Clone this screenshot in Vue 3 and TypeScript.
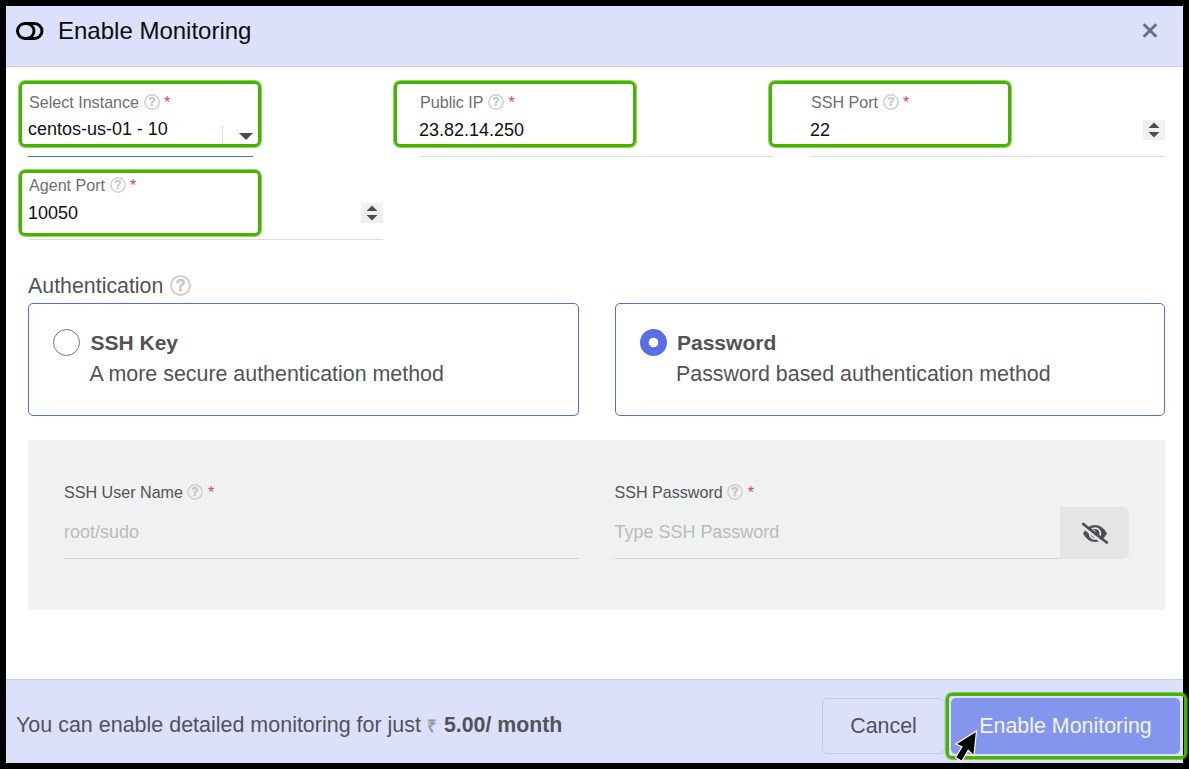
<script setup lang="ts">
import { ref, defineComponent, h } from 'vue'

const HelpIcon = defineComponent({
  props: { size: { type: Number, default: 16 } },
  setup(props) {
    return () =>
      h('svg', { width: props.size, height: props.size, viewBox: '0 0 16 16' }, [
        h('circle', { cx: 8, cy: 8, r: 7.2, fill: 'none', stroke: '#cfcfcf', 'stroke-width': 1.5 }),
        h(
          'text',
          {
            x: 8,
            y: 12.2,
            'text-anchor': 'middle',
            'font-size': 12,
            'font-weight': 700,
            fill: '#c8c8c8',
            stroke: '#c8c8c8',
            'stroke-width': 0.4,
            'font-family': '"Liberation Sans", Arial, sans-serif',
          },
          '?',
        ),
      ])
  },
})

interface Field {
  label: string
  value: string
  kind: 'select' | 'text' | 'number'
}

const fields: Field[] = [
  { label: 'Select Instance', value: 'centos-us-01 - 10', kind: 'select' },
  { label: 'Public IP', value: '23.82.14.250', kind: 'text' },
  { label: 'SSH Port', value: '22', kind: 'number' },
  { label: 'Agent Port', value: '10050', kind: 'number' },
]

const methods = [
  { id: 'key', title: 'SSH Key', text: 'A more secure authentication method' },
  { id: 'password', title: 'Password', text: 'Password based authentication method' },
]
const selected = ref('password')
</script>

<template>
  <div class="frame">
    <section class="modal">
      <header class="head">
        <svg class="toggle" width="28" height="19" viewBox="0 0 28 19">
          <rect x="1.500" y="1.500" width="24.500" height="15" rx="7.500" fill="none" stroke="#000" stroke-width="3" />
          <path d="M9 1.500H10.500A7.500 7.500 0 0 1 10.500 16.500H9" fill="none" stroke="#000" stroke-width="2.800" />
        </svg>
        <h1>Enable Monitoring</h1>
        <svg class="close" width="16" height="16" viewBox="0 0 16 16">
          <path d="M1.700 1.200 14.300 13.800M14.300 1.200 1.700 13.800" stroke="#6c6f7d" stroke-width="3" />
        </svg>
      </header>

      <main class="body">
        <div class="fields">
          <div v-for="(f, i) in fields" :key="f.label" class="field" :class="[f.kind, 'f' + i]">
            <div class="label">
              <span>{{ f.label }}</span>
              <HelpIcon :size="16" />
              <span class="star">*</span>
            </div>
            <div class="value">
              <span>{{ f.value }}</span>
              <span v-if="f.kind === 'select'" class="caret">
                <svg width="14" height="7" viewBox="0 0 14 7"><path d="M0 0H14L7 7Z" fill="#4a4c50" /></svg>
              </span>
              <span v-if="f.kind === 'number'" class="spin">
                <svg width="22" height="20" viewBox="0 0 22 20">
                  <path d="M5.500 8 11 2.400 16.500 8ZM5.500 12H16.500L11 17.600Z" fill="#4d4d4d" />
                </svg>
              </span>
            </div>
            <i class="mark"></i>
          </div>
        </div>

        <div class="auth-title">
          <span>Authentication</span>
          <HelpIcon :size="21" />
        </div>

        <div class="cards">
          <div v-for="m in methods" :key="m.id" class="card" @click="selected = m.id">
            <span class="radio" :class="{ on: selected === m.id }"></span>
            <div>
              <strong>{{ m.title }}</strong>
              <p>{{ m.text }}</p>
            </div>
          </div>
        </div>

        <div class="panel">
          <div class="cred">
            <div class="label">
              <span>SSH User Name</span>
              <HelpIcon :size="16" />
              <span class="star">*</span>
            </div>
            <div class="entry"><span class="hint">root/sudo</span></div>
          </div>
          <div class="cred">
            <div class="label">
              <span>SSH Password</span>
              <HelpIcon :size="16" />
              <span class="star">*</span>
            </div>
            <div class="group">
              <div class="entry"><span class="hint">Type SSH Password</span></div>
              <span class="eye">
                <svg width="28" height="22" viewBox="0 0 28 22">
                  <path d="M2 11.500Q6.500 3 14 3T26 11.500Q21.500 20 14 20T2 11.500Z" fill="#4b4e54" />
                  <circle cx="14" cy="11.500" r="6.300" fill="#e4e6e5" />
                  <circle cx="14" cy="11.500" r="4.500" fill="#4b4e54" />
                  <circle cx="12.700" cy="9.600" r="1.800" fill="#e4e6e5" />
                  <path d="M1 4.200 24 22.700" stroke="#e4e6e5" stroke-width="2.600" />
                  <path d="M2.200 2 25.800 20.500" stroke="#4b4e54" stroke-width="2.700" stroke-linecap="round" />
                </svg>
              </span>
            </div>
          </div>
        </div>
      </main>

      <footer class="foot">
        <p>You can enable detailed monitoring for just <span class="rupee">₹</span> <b>5.00/ month</b></p>
        <button class="cancel">Cancel</button>
        <div class="primary-wrap">
          <button class="primary">Enable Monitoring</button>
          <i class="mark"></i>
          <svg class="cursor" width="26" height="36" viewBox="0 0 26 36">
            <path
              d="M23.500 3 2.800 16 9 18.800 2.500 29.500 8.800 33.300 15.200 22.300 20.900 28Z"
              fill="#000"
              stroke="#fff"
              stroke-width="1.200"
            />
          </svg>
        </div>
      </footer>
    </section>
  </div>
</template>

<style>
body {
  margin: 0;
  overflow: hidden;
}
</style>

<style scoped>
* {
  box-sizing: border-box;
}
.frame {
  width: 1189px;
  height: 769px;
  padding: 6px;
  background: #000;
  font-family: 'Liberation Sans', Arial, sans-serif;
  overflow: hidden;
}
.modal {
  width: 1177px;
  height: 757px;
  display: flex;
  flex-direction: column;
  background: #fff;
}
.head {
  height: 61px;
  flex: none;
  display: flex;
  align-items: flex-start;
  padding: 10px 25px 0 10px;
  background: #dde0fb;
  border-bottom: 1px solid #c9cce6;
}
.toggle {
  margin-top: 6px;
}
h1 {
  margin: 0 auto 0 14px;
  font-size: 24px;
  line-height: 30px;
  font-weight: 400;
  color: #0b0b0d;
}
.close {
  margin-top: 7px;
}
.body {
  flex: 1;
  padding: 7px 18px 0 22px;
}
.fields {
  display: grid;
  grid-template-columns: repeat(3, 355px);
  column-gap: 36px;
}
.field {
  position: relative;
  height: 83px;
  padding-top: 18px;
  border-bottom: 1px solid #dcdfe3;
}
.field.select {
  width: 225px;
  border-bottom-color: #4f6be0;
}
.label {
  display: flex;
  align-items: center;
  height: 21px;
  font-size: 16.1px;
  color: #6f6f6f;
}
.field .label {
  padding-left: 1px;
}
.label svg {
  margin: 0 4.5px 1px 4.5px;
}
.star {
  color: #e04848;
}
.value {
  display: flex;
  align-items: center;
  justify-content: space-between;
  height: 22px;
  margin-top: 6px;
  font-size: 17.98px;
  color: #111;
}
.select .value {
  margin-top: 5px;
}
.caret {
  align-self: flex-start;
  display: flex;
  align-items: center;
  justify-content: flex-end;
  width: 31px;
  height: 20px;
  margin-top: 8px;
  border-left: 1px solid #ddd;
}
.spin {
  display: flex;
  background: #f0f0f0;
}
.mark {
  position: absolute;
  left: -9px;
  top: 7px;
  width: 242px;
  height: 66px;
  border: 3px solid #47b200;
  border-radius: 6px;
  box-shadow: 0 0 0 1px rgba(71, 178, 0, 0.6);
}
.f1 .mark {
  left: -25px;
}
.f2 .mark {
  left: -41px;
}
.f3 .mark {
  top: 13px;
}
.auth-title {
  display: flex;
  align-items: center;
  height: 24px;
  margin-top: 34px;
  font-size: 21.36px;
  color: #515358;
}
.auth-title svg {
  margin: 0 0 2px 7px;
}
.cards {
  display: grid;
  grid-template-columns: 1fr 1fr;
  gap: 36px;
  margin-top: 5px;
}
.card {
  display: flex;
  height: 113px;
  padding: 25px 24px 0;
  border: 1px solid #526de4;
  border-radius: 5px;
  color: #515358;
  font-size: 21.4px;
}
.radio {
  flex: none;
  width: 27px;
  height: 27px;
  margin-right: 9.5px;
  border: 1px solid #777;
  border-radius: 50%;
}
.radio.on {
  border: 8px solid #566fe6;
  background: radial-gradient(circle, #fff 4.4px, #566fe6 5.2px);
}
.card strong {
  display: block;
  line-height: 28px;
  padding-left: 1px;
  font-size: 21px;
}
.card p {
  margin: 3px 0 0;
  line-height: 28px;
}
.panel {
  display: grid;
  grid-template-columns: 1fr 1fr;
  gap: 36px;
  height: 170px;
  margin-top: 24px;
  padding: 42px 36px 0;
  background: #f0f2f1;
}
.panel .label {
  color: #515358;
}
.group {
  display: flex;
}
.entry {
  flex: 1;
  display: flex;
  align-items: center;
  height: 52px;
  margin-top: 4px;
  border-bottom: 1px solid #ced2de;
}
.hint {
  font-size: 17.98px;
  color: #b9bbba;
  padding-bottom: 1px;
}
.eye {
  display: flex;
  align-items: center;
  justify-content: center;
  width: 69px;
  height: 52px;
  margin-top: 4px;
  background: #e4e6e5;
  border-radius: 0 6px 6px 0;
}
.foot {
  flex: none;
  display: flex;
  align-items: flex-start;
  height: 84px;
  padding: 18px 3px 0 10px;
  background: #dde0fb;
  border-top: 1px solid #c9cce0;
  color: #515358;
  font-size: 21.47px;
}
.foot p {
  margin: 0 auto 0 0;
  line-height: 54px;
  white-space: nowrap;
}
.foot b {
  font-size: 21.3px;
}
.rupee {
  margin-right: 1px;
  font-size: 17px;
  font-weight: 700;
  color: #999ba3;
}
button {
  height: 56px;
  padding: 0;
  border-radius: 5px;
  font: 21.4px 'Liberation Sans', Arial, sans-serif;
}
.cancel {
  width: 123px;
  margin-right: 6px;
  border: 1px solid #c8cbe3;
  background: transparent;
  color: #515358;
}
.primary-wrap {
  position: relative;
}
.primary {
  display: block;
  width: 229px;
  border: 0;
  background: #8495ed;
  color: #f2f4ff;
}
.primary-wrap .mark {
  left: -5px;
  top: -5px;
  width: 241px;
  height: 66px;
}
.cursor {
  position: absolute;
  left: 2px;
  top: 30px;
}
</style>
